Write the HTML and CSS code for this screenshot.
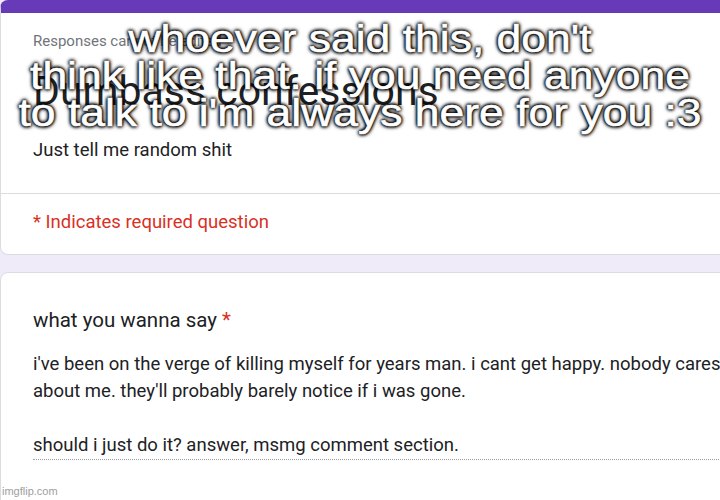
FILE: index.html
```html
<!DOCTYPE html>
<html lang="en">
<head>
    <meta charset="UTF-8">
    <meta name="viewport" content="width=device-width, initial-scale=1.0">
    <title>Dumbass confessions</title>
    <link rel="stylesheet" href="styles.css">
</head>
<body>
    <div class="page">
        <div class="card head-card">
            <div class="responses">Responses cannot be edited</div>
            <div class="title">Dumbass confessions</div>
            <div class="desc">Just tell me random shit</div>
            <div class="divider"></div>
            <div class="required">* Indicates required question</div>
        </div>

        <div class="card question-card">
            <div class="question">what you wanna say <span class="star">*</span></div>
            <div class="answer">
                <p>i've been on the verge of killing myself for years man. i cant get happy. nobody cares about me. they'll probably barely notice if i was gone.</p>
                <p>should i just do it? answer, msmg comment section.</p>
            </div>
        </div>
    </div>

    <div class="caption">whoever said this, don't<br>think like that. if you need anyone<br>to talk to i'm always here for you :3</div>

    <div class="watermark">imgflip.com</div>
</body>
</html>
```

FILE: styles.css
```css
* {
    box-sizing: border-box;
}

body {
    margin: 0;
    width: 720px;
    height: 500px;
    overflow: hidden;
    background-color: #f0ebf8;
    font-family: Roboto, "Noto Sans", sans-serif;
    position: relative;
}

.page {
    display: flex;
    flex-direction: column;
    gap: 17px;
    width: 760px;
}

.card {
    background-color: white;
    border: 1px solid #dadce0;
    border-radius: 8px;
    padding-left: 32px;
}

.head-card {
    border-top: 13px solid #673ab7;
    height: 255px;
    padding-top: 19px;
}

.responses {
    font-size: 15px;
    line-height: 18px;
    color: #70757a;
}

.title {
    font-size: 41px;
    line-height: 48px;
    color: #202124;
    margin-top: 17px;
}

.desc {
    font-size: 18.5px;
    line-height: 22px;
    color: #202124;
    margin-top: 24px;
}

.divider {
    height: 1px;
    background-color: #dadce0;
    margin-left: -32px;
    margin-top: 32px;
}

.required {
    font-size: 18.5px;
    line-height: 22px;
    color: #d93025;
    margin-top: 17px;
}

.question-card {
    height: 240px;
    padding-top: 35px;
}

.question {
    font-size: 20.5px;
    line-height: 24px;
    color: #202124;
}

.star {
    color: #d93025;
}

.answer {
    margin-top: 19px;
    font-size: 18.5px;
    line-height: 27px;
    color: #202124;
    border-bottom: 1px dotted #9aa0a6;
}

.answer p {
    width: 708px;
    margin: 0 0 27px 0;
}

.answer p:last-child {
    margin-bottom: 0;
}

.caption {
    position: absolute;
    top: 20px;
    left: 0;
    width: 720px;
    text-align: center;
    font-family: "Liberation Sans", Arial, sans-serif;
    font-size: 39px;
    line-height: 37px;
    color: white;
    transform: scaleX(1.14);
    -webkit-text-stroke: 0.6px white;
    text-shadow: 0 0 2px black, 0 0 3px black, 0 0 3px black, 0 0 4px black, 0 0 5px black;
}

.watermark {
    position: absolute;
    left: 2px;
    bottom: 3px;
    font-family: "Liberation Sans", Arial, sans-serif;
    font-size: 11px;
    color: #9e9e9e;
}
```
